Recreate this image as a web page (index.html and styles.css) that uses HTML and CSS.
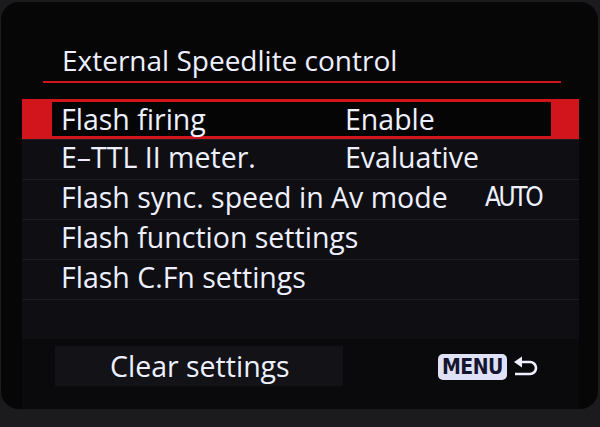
FILE: index.html
```html
<!DOCTYPE html>
<html lang="en">
<head>
    <meta charset="UTF-8">
    <meta name="viewport" content="width=device-width, initial-scale=1.0">
    <title>External Speedlite control</title>
    <link rel="stylesheet" href="styles.css">
</head>
<body>
    <div class="screen">
        <div class="header">
            <h1 class="title">External Speedlite control</h1>
        </div>

        <div class="menu-list">
            <div class="row selected">
                <div class="row-inner">
                    <span class="label">Flash firing</span>
                    <span class="value">Enable</span>
                </div>
            </div>
            <div class="row">
                <div class="row-inner">
                    <span class="label">E&#8211;TTL II meter.</span>
                    <span class="value">Evaluative</span>
                </div>
            </div>
            <div class="row">
                <div class="row-inner">
                    <span class="label">Flash sync. speed in Av mode</span>
                    <span class="value auto">AUTO</span>
                </div>
            </div>
            <div class="row">
                <div class="row-inner">
                    <span class="label">Flash function settings</span>
                </div>
            </div>
            <div class="row">
                <div class="row-inner">
                    <span class="label">Flash C.Fn settings</span>
                </div>
            </div>
            <div class="row">
                <div class="row-inner"></div>
            </div>
        </div>

        <div class="footer">
            <div class="clear-box">Clear settings</div>
            <div class="back">
                <span class="menu-key">MENU</span>
                <svg class="return-icon" width="28" height="24" viewBox="0 0 28 24">
                    <path d="M1 7 L9 1.5 L9 12.5 Z" fill="#eef0ff"/>
                    <path d="M8 7 H17 A6 6 0 0 1 17 19 H2" fill="none" stroke="#eef0ff" stroke-width="2.6"/>
                </svg>
            </div>
        </div>
    </div>
</body>
</html>
```

FILE: styles.css
```css
body {
    margin: 0;
    padding: 0;
    background: #1b1b1e;
    font-family: "Open Sans", "DejaVu Sans", sans-serif;
    color: #eef0ff;
}

.screen {
    margin: 2px 2px 0 1px;
    height: 407px;
    border-radius: 18px;
    background: #060607;
    display: flex;
    flex-direction: column;
    overflow: hidden;
}

.header {
    margin: 0 37px 0 42px;
    padding: 39px 0 0 19px;
    border-bottom: 2px solid #d0141c;
    height: 40px;
}

.title {
    margin: 0;
    font-size: 28px;
    font-weight: 500;
    line-height: 38px;
}

.menu-list {
    margin: 16px 19px 0 21px;
    background: #0f0f13;
}

.row {
    height: 40px;
    box-sizing: border-box;
    border-top: 1px solid #1b1b20;
}

.row:first-child {
    border-top: none;
}

.row-inner {
    display: flex;
    height: 100%;
    box-sizing: border-box;
    margin: 0 28px 0 30px;
    padding: 0 0 6px 9px;
    align-items: center;
    font-size: 28.5px;
    font-weight: 500;
    line-height: 34px;
}

.row.selected {
    background: #d2141d;
    padding: 3px 0;
}

.row.selected .row-inner {
    background: #050505;
    padding-bottom: 0;
}

.label {
    width: 284px;
    white-space: nowrap;
}

.value.auto {
    margin-left: 140px;
    font-family: "DejaVu Sans Condensed", "DejaVu Sans", sans-serif;
    font-size: 26px;
    letter-spacing: -2.4px;
}

.footer {
    flex: 1;
    display: flex;
    align-items: flex-start;
    margin: 0 19px 0 21px;
    padding-top: 7px;
    background: #0a0a0d;
}

.clear-box {
    width: 288px;
    height: 40px;
    margin-left: 33px;
    background: #131317;
    box-sizing: border-box;
    padding: 2px 0 0 55px;
    font-size: 28.5px;
    font-weight: 500;
    line-height: 36px;
}

.back {
    display: flex;
    align-items: center;
    margin: 8px 0 0 95px;
}

.menu-key {
    background: #dfe2f6;
    color: #151530;
    border-radius: 5px;
    font-family: "DejaVu Sans Condensed", "DejaVu Sans", sans-serif;
    font-weight: bold;
    font-size: 21px;
    line-height: 26px;
    padding: 0 4px;
    letter-spacing: -0.5px;
}

.return-icon {
    margin-left: 6px;
}
```
